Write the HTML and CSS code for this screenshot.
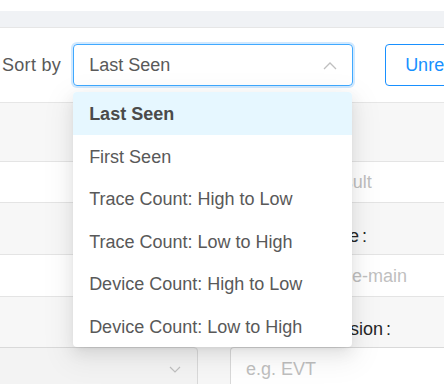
FILE: index.html
```html
<!DOCTYPE html>
<html lang="en">
<head>
  <meta charset="UTF-8" />
  <meta name="viewport" content="width=device-width, initial-scale=1.0"/>
  <title>Issues - Sort</title>
  <link rel="stylesheet" href="styles.css">
</head>
<body>
  <div class="top-strip"></div>
  <div class="page-band"></div>

  <div class="toolbar">
    <span class="sort-label">Sort by</span>
    <div class="select-wrap">
      <div class="select select-open">
        <span class="select-value">Last Seen</span>
        <svg class="select-arrow" width="14" height="9" viewBox="0 0 14 9">
          <polyline points="1,8 7,2 13,8" fill="none" stroke="#bfbfbf" stroke-width="1.3"/>
        </svg>
      </div>

      <!-- liste déroulante ouverte -->
      <ul class="dropdown">
        <li class="option option-active">Last Seen</li>
        <li class="option">First Seen</li>
        <li class="option">Trace Count: High to Low</li>
        <li class="option">Trace Count: Low to High</li>
        <li class="option">Device Count: High to Low</li>
        <li class="option">Device Count: Low to High</li>
      </ul>
    </div>
    <button class="btn-outline">Unresolved</button>
  </div>

  <div class="form-table">
    <div class="row row-label row-head"></div>
    <div class="row row-value row-short">
      <span class="cell placeholder push">e.g. Test Result</span>
    </div>
    <div class="row row-label row-mid">
      <span class="cell label pull">Product Name<span class="colon">:</span></span>
    </div>
    <div class="row row-value row-short2">
      <span class="cell placeholder shift">e.g. hardware-main</span>
    </div>
    <div class="row row-label row-mid2">
      <span class="cell label pull-more">Firmware Version<span class="colon">:</span></span>
    </div>
    <div class="row row-inputs">
      <div class="select-disabled">
        <svg class="select-arrow" width="12" height="7" viewBox="0 0 12 7">
          <polyline points="1,1 6,6 11,1" fill="none" stroke="#bfbfbf" stroke-width="1.2"/>
        </svg>
      </div>
      <div class="text-input">
        <span class="placeholder">e.g. EVT</span>
      </div>
    </div>
  </div>
</body>
</html>
```

FILE: styles.css
```css
body {
  margin: 0;
  padding: 0;
  font-family: 'Liberation Sans', Arial, sans-serif;
  font-size: 18px;
  color: #595959;
  background-color: #fff;
  width: 444px;
  height: 384px;
  overflow: hidden;
}

.top-strip {
  height: 11px;
  background-color: #fff;
}

.page-band {
  height: 16px;
  background-color: #f0f2f5;
  border-bottom: 1px solid #e6e6e6;
}

.toolbar {
  height: 74px;
  display: flex;
  align-items: center;
  padding-left: 2px;
  border-bottom: 1px solid #e6e6e6;
  white-space: nowrap;
  background-color: #fff;
}

.sort-label {
  color: #595959;
  margin-right: 12px;
  letter-spacing: 0.3px;
}

.select-wrap {
  position: relative;
}

.select {
  box-sizing: border-box;
  width: 280px;
  height: 42px;
  border: 1px solid #40a9ff;
  border-radius: 4px;
  display: flex;
  align-items: center;
  justify-content: space-between;
  padding: 0 15px 0 15px;
}

.select-open {
  box-shadow: 0 0 0 2px rgba(24, 144, 255, 0.2);
}

.select-value {
  color: #595959;
}

.dropdown {
  position: absolute;
  top: 48px;
  left: 0;
  width: 279px;
  margin: 0;
  padding: 0;
  list-style: none;
  background-color: #fff;
  border-radius: 4px;
  overflow: hidden;
  z-index: 10;
  box-shadow: 0 3px 6px -4px rgba(0,0,0,0.12), 0 6px 16px 0 rgba(0,0,0,0.08), 0 9px 28px 8px rgba(0,0,0,0.05);
}

.option {
  box-sizing: border-box;
  height: 42.5px;
  display: flex;
  align-items: center;
  padding: 3px 16px 0;
  color: #595959;
}

.option-active {
  background-color: #e6f7ff;
  font-weight: bold;
  color: #4a4a4a;
}

.btn-outline {
  margin-left: 32px;
  height: 42px;
  padding: 0 19px;
  border: 1px solid #1890ff;
  border-radius: 4px;
  background-color: #fff;
  color: #1890ff;
  font-family: 'Liberation Sans', Arial, sans-serif;
  font-size: 18px;
  flex-shrink: 0;
}

.row {
  display: flex;
  border-bottom: 1px solid #e4e4e4;
  white-space: nowrap;
}

.row-label {
  background-color: #f7f7f7;
  align-items: flex-end;
}

.row-value {
  background-color: #fff;
  align-items: center;
}

.row-head { height: 58px; }
.row-short { height: 40px; }
.row-mid { height: 51px; }
.row-short2 { height: 41px; }
.row-mid2 { height: 50px; }

.cell {
  margin-left: 246px;
  line-height: 22px;
}

.row-label .cell {
  padding-bottom: 7px;
}

.shift {
  margin-left: 252px;
}

.push {
  margin-left: 248px;
}

.pull {
  margin-left: 244px;
}

.pull-more {
  margin-left: 243px;
}

.label {
  color: #262626;
}

.colon {
  margin-left: 3px;
}

.placeholder {
  color: #bfbfbf;
}

.row-inputs {
  height: 40px;
  border-bottom: none;
  background-color: #f7f7f7;
  margin-top: -1px;
}

.select-disabled {
  box-sizing: border-box;
  width: 208px;
  height: 44px;
  margin-left: -10px;
  border: 1px solid #d9d9d9;
  border-radius: 4px;
  background-color: #f3f3f3;
  display: flex;
  align-items: center;
  justify-content: flex-end;
  padding-right: 16px;
}

.text-input {
  box-sizing: border-box;
  margin-left: 32px;
  flex: 1;
  height: 44px;
  border: 1px solid #d9d9d9;
  border-right: none;
  border-radius: 4px 0 0 4px;
  background-color: #fff;
  display: flex;
  align-items: center;
  padding-left: 15px;
}
```
